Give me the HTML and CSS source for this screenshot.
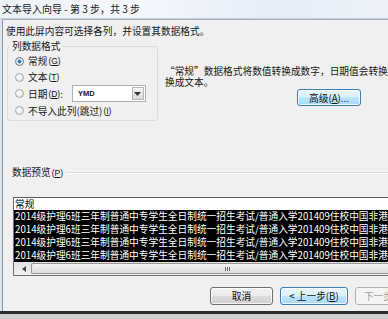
FILE: index.html
```html
<!DOCTYPE html>
<html lang="zh-CN">
<head>
<meta charset="utf-8">
<title>文本导入向导</title>
<link rel="stylesheet" href="styles.css">
</head>
<body>
<div class="window">
  <div class="titlebar">文本导入向导 - 第 3 步，共 3 步</div>
  <div class="client">
    <p class="intro">使用此屏内容可选择各列，并设置其数据格式。</p>
    <div class="top">
      <fieldset class="group">
        <legend>列数据格式</legend>
        <label class="opt h16"><span class="radio checked"></span>常规<span class="mn">(<u>G</u>)</span></label>
        <label class="opt h16"><span class="radio"></span>文本<span class="mn">(<u>T</u>)</span></label>
        <label class="opt h17"><span class="radio"></span>日期<span class="mn">(<u>D</u>)</span>:
          <span class="select"><span class="sel-val">YMD</span><span class="sel-btn"><svg width="7" height="4" viewBox="0 0 7 4"><path d="M0 0h7L3.5 4z" fill="#333"/></svg></span></span>
        </label>
        <label class="opt h17"><span class="radio"></span>不导入此列(跳过)<span class="mn">(<u>I</u>)</span></label>
      </fieldset>
      <div class="info">
        <div class="info-clip">
          <p class="info-text">“常规”数据格式将数值转换成数字，日期值会转换成日期，其余数据则转<br>换成文本。</p>
        </div>
        <button class="btn default adv">高级(<u>A</u>)...</button>
      </div>
    </div>
    <div class="preview-label"><span>数据预览<span class="mn">(<u>P</u>)</span></span><span class="etch"></span></div>
    <div class="preview">
      <div class="prow head">常规</div>
      <div class="prow sel">2014级护理6班三年制普通中专学生全日制统一招生考试/普通入学201409住校中国非港澳台</div>
      <div class="prow sel">2014级护理6班三年制普通中专学生全日制统一招生考试/普通入学201409住校中国非港澳台</div>
      <div class="prow sel">2014级护理6班三年制普通中专学生全日制统一招生考试/普通入学201409住校中国非港澳台</div>
      <div class="prow sel">2014级护理6班三年制普通中专学生全日制统一招生考试/普通入学201409住校中国非港澳台</div>
      <div class="hscroll">
        <span class="sb-arrow"><svg width="4" height="6" viewBox="0 0 4 6"><path d="M4 0v6L0 3z" fill="#444"/></svg></span>
        <span class="thumb"><span class="grip"></span></span>
      </div>
    </div>
    <div class="buttons">
      <button class="btn">取消</button>
      <button class="btn default">&lt; 上一步(<u>B</u>)</button>
      <button class="btn disabled">下一步(<u>N</u>) &gt;</button>
    </div>
  </div>
  <div class="bottom-edge"></div>
</div>
</body>
</html>
```
FILE: styles.css
```css
html, body {
  margin: 0;
  padding: 0;
}
body {
  width: 388px;
  height: 319px;
  overflow: hidden;
  font-family: "Noto Sans CJK SC", "Liberation Sans", sans-serif;
  font-size: 9.7px;
  color: #161616;
  background: #dbe4ef;
}
.window {
  width: 388px;
  height: 319px;
  overflow: hidden;
  display: flex;
  flex-direction: column;
  background: #dbe4ef;
}
.titlebar {
  height: 18px;
  line-height: 17px;
  padding-left: 2px;
  font-size: 10px;
  white-space: nowrap;
  color: #1a1a1a;
  background: linear-gradient(90deg, #eef3f8 0%, #f4f7fb 40%, #e6edf6 70%, #eef2f8 100%);
  border-bottom: 1px solid #c3cedb;
}
.client {
  margin-left: 2px;
  height: 292px;
  box-sizing: border-box;
  border-left: 1px solid #8e949b;
  border-top: 1px solid #a9b3bf;
  background: #f0f0f0;
  display: flex;
  flex-direction: column;
  overflow: hidden;
}
.intro {
  margin: 5px 0 0 3px;
  line-height: 12px;
  white-space: nowrap;
}
.top {
  display: flex;
  margin-top: 3px;
}
.group {
  margin: 0 0 0 4px;
  width: 151px;
  flex: none;
  box-sizing: border-box;
  padding: 1px 4px 1px 7px;
  border: 1px solid #d5dfe5;
  border-radius: 3px;
}
.group legend {
  padding: 0 2px;
  margin-left: -5px;
  line-height: 12px;
}
.opt {
  display: flex;
  align-items: center;
  white-space: nowrap;
}
.h16 { height: 16px; }
.h17 { height: 17px; }
.mn {
  font-family: "Liberation Sans", sans-serif;
  font-size: 8.5px;
  margin-left: 1px;
}
.radio {
  width: 9px;
  height: 9px;
  box-sizing: border-box;
  border-radius: 50%;
  border: 1px solid #a6a9ad;
  background: radial-gradient(circle at 40% 40%, #ffffff 0%, #e6e6e6 70%);
  margin-right: 4px;
  flex: none;
}
.radio.checked {
  border-color: #6e7680;
  background: radial-gradient(circle, #1f6c9c 0%, #3a8fc2 35%, #dfe6ec 45%, #f4f4f4 100%);
}
.select {
  margin-left: 9px;
  width: 74px;
  height: 17px;
  box-sizing: border-box;
  border: 1px solid #a9b0b8;
  background: #fff;
  display: flex;
  align-items: center;
  justify-content: space-between;
  padding: 1px;
}
.sel-val {
  font-family: "Liberation Sans", sans-serif;
  font-weight: bold;
  font-size: 7.5px;
  padding-left: 4px;
}
.sel-btn {
  width: 12px;
  height: 13px;
  box-sizing: border-box;
  border: 1px solid #b4b8bd;
  background: linear-gradient(#f5f5f5, #d8d8d8);
  display: flex;
  align-items: center;
  justify-content: center;
}
.info {
  margin-left: 7px;
  padding-top: 26px;
  flex: 1;
  min-width: 0;
  display: flex;
  flex-direction: column;
  align-items: flex-start;
}
.info-clip {
  width: 100%;
  overflow: hidden;
}
.info-text {
  margin: 0;
  line-height: 11px;
  white-space: nowrap;
}
.btn {
  height: 17px;
  box-sizing: border-box;
  padding: 0;
  font-family: "Noto Sans CJK SC", "Liberation Sans", sans-serif;
  font-size: 9.7px;
  color: #111;
  border: 1px solid #707070;
  border-radius: 3px;
  box-shadow: inset 0 0 0 1px rgba(255, 255, 255, 0.75);
  background: linear-gradient(#f2f2f2 0%, #ebebeb 49%, #dddddd 50%, #cfcfcf 100%);
  white-space: nowrap;
  line-height: 14px;
  flex: none;
}
.btn.default {
  border-color: #3c7fb1;
  background: linear-gradient(#eaf6fd 0%, #d9f0fc 49%, #bee6fd 50%, #a7d9f5 100%);
}
.btn.disabled {
  border-color: #adb2b5;
  background: #f4f4f4;
  color: #a0a0a0;
  box-shadow: none;
}
.adv {
  margin: 1px 0 0 132px;
  width: 64px;
}
.preview-label {
  margin-top: 45px;
  padding-left: 9px;
  display: flex;
  align-items: center;
  line-height: 12px;
  white-space: nowrap;
}
.etch {
  flex: 1;
  margin-left: 3px;
  border-top: 1px solid #d5dfe5;
  border-bottom: 1px solid #ffffff;
}
.preview {
  margin: 18px 0 0 10px;
  border: 1px solid #6f6f6f;
  border-top: 1px solid #5a5a5a;
  border-right: none;
  background: #fff;
}
.prow {
  white-space: nowrap;
  padding-left: 1px;
  overflow: hidden;
}
.prow.head {
  height: 12px;
  line-height: 12px;
  color: #000;
}
.prow.sel {
  height: 13px;
  line-height: 13px;
  background: #000;
  color: #fff;
}
.hscroll {
  height: 13px;
  display: flex;
  background: linear-gradient(#e3e3e3, #f0f0f0);
}
.sb-arrow {
  width: 15px;
  display: flex;
  align-items: center;
  justify-content: center;
  padding-left: 2px;
}
.thumb {
  flex: 1;
  margin: 1px 0;
  border: 1px solid #979797;
  border-right: none;
  border-radius: 2px 0 0 2px;
  background: linear-gradient(#f4f4f4, #dcdcdc);
  position: relative;
}
.grip {
  position: absolute;
  left: 193px;
  top: 3px;
  width: 5px;
  height: 4px;
  background: repeating-linear-gradient(90deg, #6d6d6d 0 1px, transparent 1px 2px);
}
.buttons {
  display: flex;
  gap: 7px;
  margin: 11px 0 0 207px;
}
.buttons .btn {
  height: 18px;
}
.buttons .btn:nth-child(1) { width: 63px; }
.buttons .btn:nth-child(2) { width: 68px; }
.buttons .btn:nth-child(3) { width: 68px; }
.bottom-edge {
  flex: 1;
  border-top: 3px solid #2a2a2a;
  background: #cfcfcf;
}
```
